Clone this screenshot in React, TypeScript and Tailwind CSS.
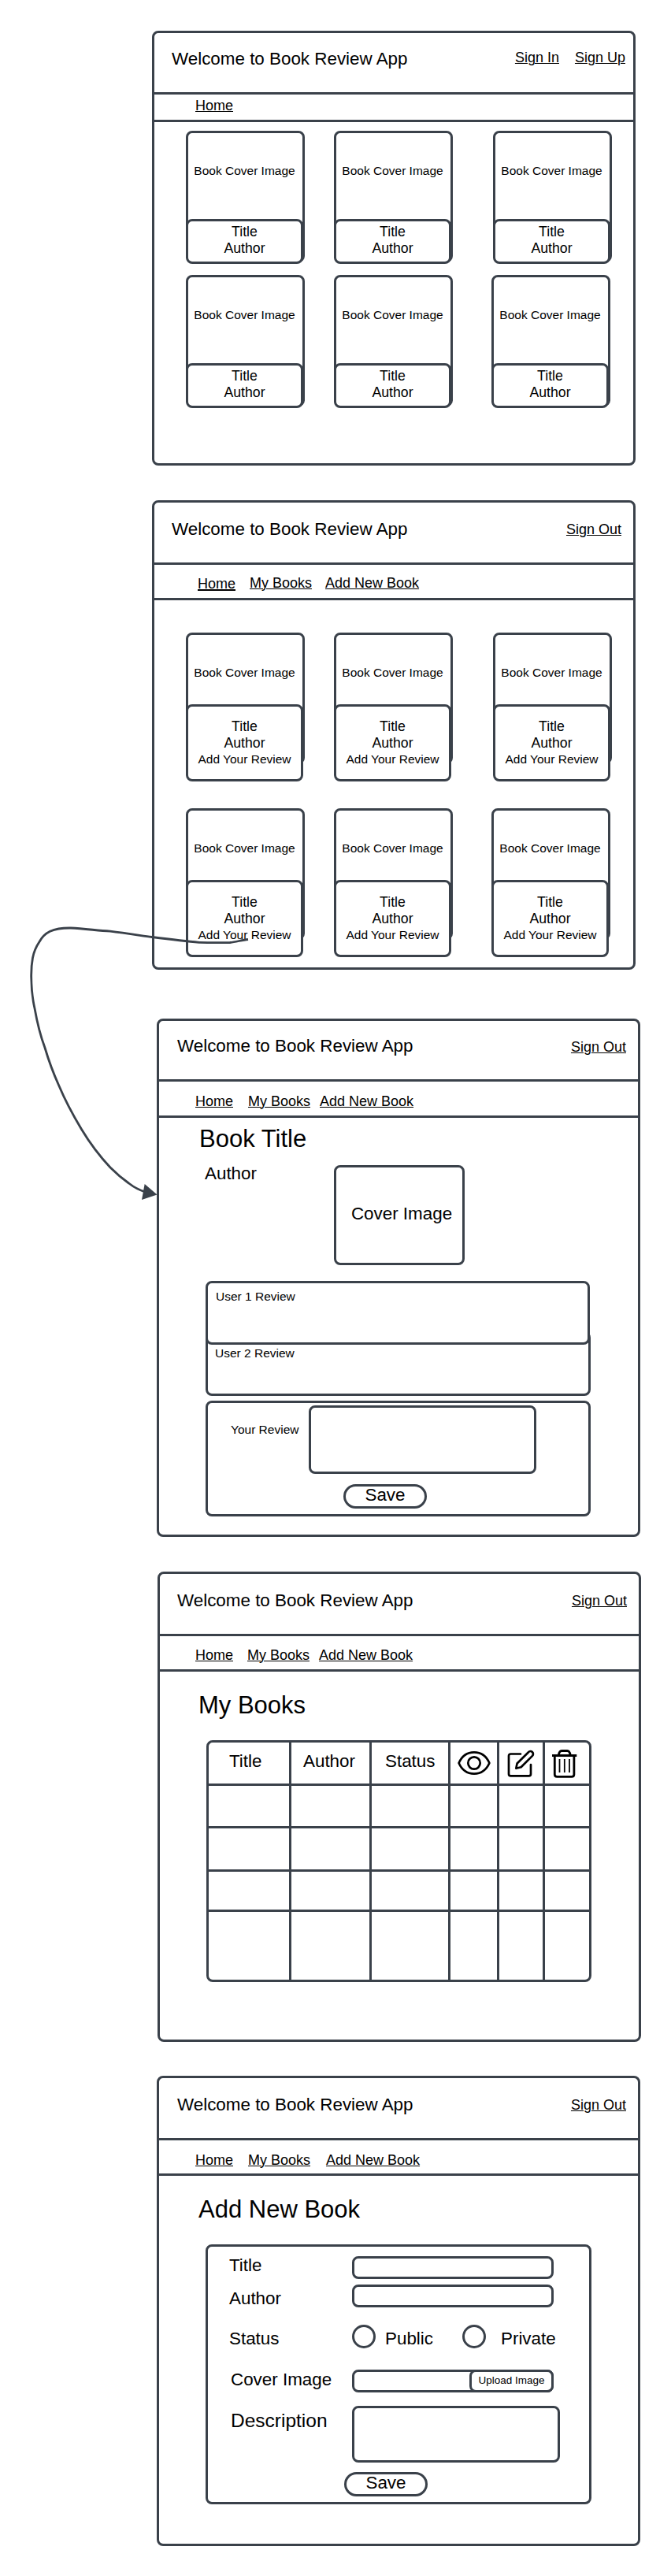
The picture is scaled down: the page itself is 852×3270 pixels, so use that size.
import type { ReactNode } from "react";

const sm = "text-[15.5px] leading-[17px] whitespace-nowrap";
const md = "text-[18px] leading-[20px] whitespace-nowrap";
const lg = "text-[22.4px] leading-[27px] whitespace-nowrap";
const xl = "text-[31px] leading-[35px] whitespace-nowrap";
const box = "border-[3px] border-[#3a414a] bg-white";

function Link({ children, className = "" }: { children: ReactNode; className?: string }) {
  return (
    <a className={`${md} block underline decoration-1 underline-offset-[1px] ${className}`}>{children}</a>
  );
}

function Screen({
  className,
  header,
  brand,
  actions,
  nav,
  navItems,
  children,
}: {
  className: string;
  header: string;
  brand: string;
  actions: ReactNode;
  nav: string;
  navItems: ReactNode;
  children: ReactNode;
}) {
  return (
    <section className={`w-[614px] shrink-0 rounded-[8px] ${box} ${className}`}>
      <header className={`flex items-start border-b-[3px] border-[#3a414a] ${header}`}>
        <h1 className={`${lg} ${brand}`}>Welcome to Book Review App</h1>
        {actions}
      </header>
      <nav className={`flex items-start border-b-[3px] border-[#3a414a] ${nav}`}>{navItems}</nav>
      {children}
    </section>
  );
}

function BookCard({ review = false, className = "" }: { review?: boolean; className?: string }) {
  return (
    <article className={`h-[167px] w-[151px] shrink-0 rounded-[8px] pt-[39px] ${box} ${className}`}>
      <p className={`${sm} -ml-[2px] text-center`}>Book Cover Image</p>
      <div
        className={`-ml-[3px] w-[149px] rounded-[8px] text-center ${box} ${
          review ? "mt-[32px] h-[98px] pt-[15px]" : "mt-[53px] h-[57px] pt-[3px]"
        }`}
      >
        <p className="text-[17.7px] leading-[20px]">Title</p>
        <p className="mt-px text-[17.7px] leading-[20px]">Author</p>
        {review && <p className={`${sm} mt-[2px]`}>Add Your Review</p>}
      </div>
    </article>
  );
}

function CardRows({ review = false, className }: { review?: boolean; className: string }) {
  return (
    <div className={`ml-[40px] flex flex-col ${className}`}>
      <div className="flex">
        <BookCard review={review} />
        <BookCard review={review} className="ml-[37px]" />
        <BookCard review={review} className="ml-[51px]" />
      </div>
      <div className="flex">
        <BookCard review={review} />
        <BookCard review={review} className="ml-[37px]" />
        <BookCard review={review} className="ml-[49px]" />
      </div>
    </div>
  );
}

function SaveButton({ className }: { className: string }) {
  return (
    <button className={`flex h-[31px] w-[106px] items-start justify-center rounded-full ${box} ${className}`}>
      <span className={`${lg} -mt-[3px]`}>Save</span>
    </button>
  );
}

function EyeIcon() {
  return (
    <svg className="mt-[11px] ml-[9px] h-[30px] w-[42px]" viewBox="0 0 42 30" fill="none" stroke="#000" strokeWidth="2.7">
      <path d="M1.6 15C5.5 6.2 12.5 1.4 21 1.4S36.500 6.200 40.400 15C36.500 23.800 29.500 28.600 21 28.600S5.500 23.800 1.600 15Z" strokeLinejoin="round" />
      <circle cx="21" cy="15" r="7.700" />
    </svg>
  );
}

function EditIcon() {
  return (
    <svg className="mt-[9px] ml-[9px] h-[36px] w-[36px]" viewBox="0 0 36 36" fill="none" stroke="#000" strokeWidth="2.7" strokeLinecap="round" strokeLinejoin="round">
      <path d="M18 5.500H5.500Q3 5.500 3 8V31Q3 33.400 5.500 33.400H28.500Q31 33.400 31 31V19" />
      <path d="M12.300 23.800L13.600 17.500L28 3.200A3.300 3.300 0 0 1 33 7.900L18.600 22.300Z" />
    </svg>
  );
}

function TrashIcon() {
  return (
    <svg className="mt-[8px] ml-[8px] h-[37px] w-[34px]" viewBox="0 0 34 37" fill="none" stroke="#000" strokeWidth="2.800">
      <path d="M1 8.500H32.300" strokeWidth="3" />
      <path d="M9.300 8Q10.200 2.500 13.200 2.500H20.300Q23.300 2.500 24.200 8" />
      <path d="M4.300 8.500V32.500Q4.300 35.300 7.200 35.300H26Q28.900 35.300 28.900 32.500V8.500" />
      <path d="M10.500 13V30M16.800 13V30M23 13V30" strokeWidth="1.800" />
    </svg>
  );
}

const columns = ["w-[105px]", "w-[102px]", "w-[100px]", "w-[62px]", "w-[58px]", "w-[56px]"];
const rows = ["h-[55px]", "h-[54px]", "h-[55px]", "h-[51px]", "h-[86px]"];
const headings: ReactNode[] = [
  <span className={`${lg} mt-[10px] ml-[26px]`}>Title</span>,
  <span className={`${lg} mt-[10px] ml-[15px]`}>Author</span>,
  <span className={`${lg} mt-[10px] ml-[17px]`}>Status</span>,
  <EyeIcon />,
  <EditIcon />,
  <TrashIcon />,
];

function BooksTable() {
  return (
    <div className={`mt-[27px] ml-[59px] h-[307px] w-[489px] rounded-[8px] ${box}`}>
      {rows.map((height, r) => (
        <div key={r} className={`flex ${height} ${r < 4 ? "border-b-[3px] border-[#3a414a]" : ""}`}>
          {columns.map((width, c) => (
            <div
              key={c}
              className={`flex shrink-0 items-start ${width} ${c < 5 ? "border-r-[3px] border-[#3a414a]" : ""} ${
                r < 4 ? "-mb-[3px]" : ""
              }`}
            >
              {r === 0 && headings[c]}
            </div>
          ))}
        </div>
      ))}
    </div>
  );
}

function Field({ label, className, labelClass, children }: { label: string; className: string; labelClass: string; children: ReactNode }) {
  return (
    <div className={`flex items-start ${className}`}>
      <div className="w-[183px] shrink-0">
        <div className={labelClass}>{label}</div>
      </div>
      {children}
    </div>
  );
}

function FlowArrow() {
  return (
    <svg className="pointer-events-none absolute top-[1160px] left-[30px] h-[380px] w-[300px]" viewBox="30 1160 300 380" fill="none">
      <path
        d="M315 1192.500C307 1193.500 300 1195.500 292 1196.500C278 1196.800 265 1196.800 253 1196.300C233 1194.500 213 1192 193 1189.500C175 1187 158 1184.500 140 1182.200C123 1181 107 1179 90 1178C80 1177.800 71 1179 63.500 1182.300C57 1185.500 53 1190 50 1195.500C45 1203 42.800 1209 41.500 1216C40 1224 39.600 1232 39.700 1240C39.800 1254 41 1267 44 1280C47 1297 51 1314 57 1330C62 1347 68 1363 75 1378.500C83 1397.500 93 1416 103.500 1433.500C114 1451 126 1467 140 1482C148 1490 155 1496 163.500 1502C170 1507 176 1510.500 184 1512.800"
        stroke="#3a414a"
        strokeWidth="2.800"
      />
      <path d="M183.700 1503L199.500 1516.600L180 1523Z" fill="#3a414a" />
    </svg>
  );
}

export default function App() {
  return (
    <main className="relative flex h-[3270px] w-[852px] flex-col bg-white pt-[39px] font-['Liberation_Sans',Arial,sans-serif] text-black">
      <Screen
        className="ml-[193px] h-[552px]"
        header="h-[78px]"
        brand="mt-[19px] ml-[22px]"
        actions={
          <div className="mt-[21px] mr-[10px] ml-auto flex gap-[20px]">
            <Link>Sign In</Link>
            <Link>Sign Up</Link>
          </div>
        }
        nav="h-[35px] pt-[4px] pl-[52px]"
        navItems={<Link>Home</Link>}
      >
        <CardRows className="gap-[16px] pt-[11px]" />
      </Screen>

      <Screen
        className="mt-[44px] ml-[193px] h-[596px]"
        header="h-[79px]"
        brand="mt-[20px] ml-[22px]"
        actions={<Link className="mt-[24px] mr-[15px] ml-auto">Sign Out</Link>}
        nav="h-[45px] pt-[13px] pl-[55px]"
        navItems={
          <>
            <div className="w-[66px] pt-px">
              <a className={`${md} block underline decoration-2 underline-offset-[1px]`}>Home</a>
            </div>
            <div className="w-[96px]"><Link>My Books</Link></div>
            <Link>Add New Book</Link>
          </>
        }
      >
        <CardRows review className="gap-[56px] pt-[41px]" />
      </Screen>

      <Screen
        className="mt-[62px] ml-[199px] h-[658px]"
        header="h-[77px]"
        brand="mt-[18px] ml-[23px]"
        actions={<Link className="mt-[23px] mr-[15px] ml-auto">Sign Out</Link>}
        nav="h-[46px] pt-[15px] pl-[46px]"
        navItems={
          <>
            <div className="w-[67px]"><Link>Home</Link></div>
            <div className="w-[91px]"><Link>My Books</Link></div>
            <Link>Add New Book</Link>
          </>
        }
      >
        <h2 className={`${xl} pt-[9px] pl-[51px]`}>Book Title</h2>
        <div className="flex items-start">
          <p className={`${lg} w-[222px] shrink-0 pt-[13px] pl-[58px]`}>Author</p>
          <div className={`mt-[16px] h-[127px] w-[166px] rounded-[8px] pt-[45px] pl-[6px] text-center ${box}`}>
            <p className={lg}>Cover Image</p>
          </div>
        </div>
        <div className={`relative z-10 mt-[20px] ml-[59px] h-[81px] w-[488px] rounded-[8px] pt-[8px] pl-[10px] ${box}`}>
          <p className={sm}>User 1 Review</p>
        </div>
        <div className={`-mt-[17px] ml-[59px] h-[82px] w-[489px] rounded-[8px] pt-[16px] pl-[9px] ${box}`}>
          <p className={sm}>User 2 Review</p>
        </div>
        <form className={`mt-[6px] ml-[59px] h-[147px] w-[489px] rounded-[8px] ${box}`}>
          <div className="flex items-start">
            <div className={`${sm} w-[128px] shrink-0 pt-[25px] pl-[29px]`}>Your Review</div>
            <div className={`mt-[3px] h-[87px] w-[289px] rounded-[8px] ${box}`} />
          </div>
          <SaveButton className="mt-[13px] ml-[172px]" />
        </form>
      </Screen>

      <Screen
        className="mt-[44px] ml-[200px] h-[597px]"
        header="h-[79px]"
        brand="mt-[20px] ml-[22px]"
        actions={<Link className="mt-[24px] mr-[15px] ml-auto">Sign Out</Link>}
        nav="h-[45px] pt-[14px] pl-[45px]"
        navItems={
          <>
            <div className="w-[66px]"><Link>Home</Link></div>
            <div className="w-[91px]"><Link>My Books</Link></div>
            <Link>Add New Book</Link>
          </>
        }
      >
        <h2 className={`${xl} pt-[25px] pl-[49px]`}>My Books</h2>
        <BooksTable />
      </Screen>

      <Screen
        className="mt-[43px] ml-[199px] h-[597px]"
        header="h-[79px]"
        brand="mt-[20px] ml-[23px]"
        actions={<Link className="mt-[24px] mr-[15px] ml-auto">Sign Out</Link>}
        nav="h-[45px] pt-[15px] pl-[46px]"
        navItems={
          <>
            <div className="w-[67px]"><Link>Home</Link></div>
            <div className="w-[99px]"><Link>My Books</Link></div>
            <Link>Add New Book</Link>
          </>
        }
      >
        <h2 className={`${xl} pt-[25px] pl-[50px]`}>Add New Book</h2>
        <form className={`mt-[27px] ml-[59px] h-[330px] w-[490px] rounded-[8px] ${box}`}>
          <Field label="Title" className="h-[48px]" labelClass={`${lg} mt-[10px] ml-[27px]`}>
            <div className={`mt-[12px] h-[29px] w-[256px] rounded-[8px] ${box}`} />
          </Field>
          <Field label="Author" className="h-[51px]" labelClass={`${lg} mt-[4px] ml-[27px]`}>
            <div className={`h-[29px] w-[256px] rounded-[8px] ${box}`} />
          </Field>
          <Field label="Status" className="h-[57px]" labelClass={`${lg} mt-[4px] ml-[27px]`}>
            <div className={`h-[30px] w-[30px] rounded-full ${box}`} />
            <div className={`${lg} mt-[4px] ml-[12px] w-[98px]`}>Public</div>
            <div className={`h-[30px] w-[30px] rounded-full ${box}`} />
            <div className={`${lg} mt-[4px] ml-[19px]`}>Private</div>
          </Field>
          <Field label="Cover Image" className="h-[46px]" labelClass={`${lg} -mt-px ml-[29px]`}>
            <div className={`flex h-[29px] w-[256px] justify-end rounded-[8px] ${box}`}>
              <button
                className={`-m-[3px] flex h-[29px] w-[107px] shrink-0 items-start justify-center rounded-[8px] pt-[3px] text-[13.5px] leading-[15px] whitespace-nowrap ${box}`}
              >
                Upload Image
              </button>
            </div>
          </Field>
          <Field label="Description" className="h-[84px]" labelClass="mt-[5px] ml-[29px] text-[24.5px] leading-[27px]">
            <div className={`h-[72px] w-[264px] rounded-[8px] ${box}`} />
          </Field>
          <SaveButton className="ml-[173px]" />
        </form>
      </Screen>

      <FlowArrow />
    </main>
  );
}
